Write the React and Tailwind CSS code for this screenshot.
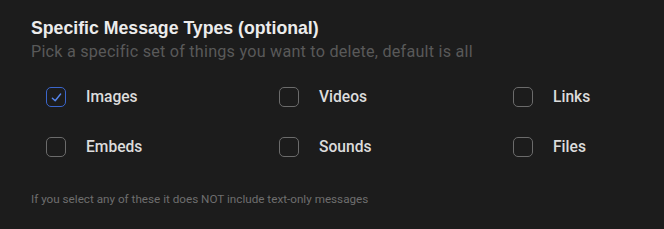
import React, { useState } from 'react';

const types = ['Images', 'Videos', 'Links', 'Embeds', 'Sounds', 'Files'];

const Box = ({ checked }) => (
  <span
    className={`flex h-5 w-5 shrink-0 items-center justify-center rounded-[5px] ${
      checked ? 'border-[1.5px] border-[#3b66cc]' : 'border border-[#6b6b6b]'
    }`}
  >
    {checked && (
      <svg width="13" height="13" viewBox="0 0 12 12" fill="none">
        <path d="M2.2 6.6L4.8 9L9.8 2.8" stroke="#5585ec" strokeWidth="1.3" strokeLinecap="round" strokeLinejoin="round" />
      </svg>
    )}
  </span>
);

const App = () => {
  const [selected, setSelected] = useState(['Images']);

  const toggle = (t) => {
    setSelected((s) => (s.includes(t) ? s.filter((x) => x !== t) : [...s, t]));
  };

  return (
    <div className="h-[229px] w-[664px] bg-[#1c1c1c] px-[31px] pt-[17px] font-['Roboto',sans-serif]">
      <h2 className="font-['Liberation_Sans',Arial,sans-serif] text-[17.7px] font-bold leading-[22px] text-[#ececec]">
        Specific Message Types (optional)
      </h2>
      <p className="mt-[3px] text-[16.2px] leading-5 tracking-[0.22px] text-[#595959]">
        Pick a specific set of things you want to delete, default is all
      </p>
      <div className="mt-[25px] grid grid-cols-[233px_234px_1fr] gap-y-[30px] pl-[15px]">
        {types.map((t) => (
          <button
            key={t}
            type="button"
            onClick={() => toggle(t)}
            className="flex items-center gap-5 text-left"
          >
            <Box checked={selected.includes(t)} />
            <span className="text-[15.6px] font-medium leading-5 text-[#dcdcdc]">{t}</span>
          </button>
        ))}
      </div>
      <p className="mt-[35px] text-[11.7px] leading-[14px] text-[#6e6e6e]">
        If you select any of these it does NOT include text-only messages
      </p>
    </div>
  );
};

export default App;
